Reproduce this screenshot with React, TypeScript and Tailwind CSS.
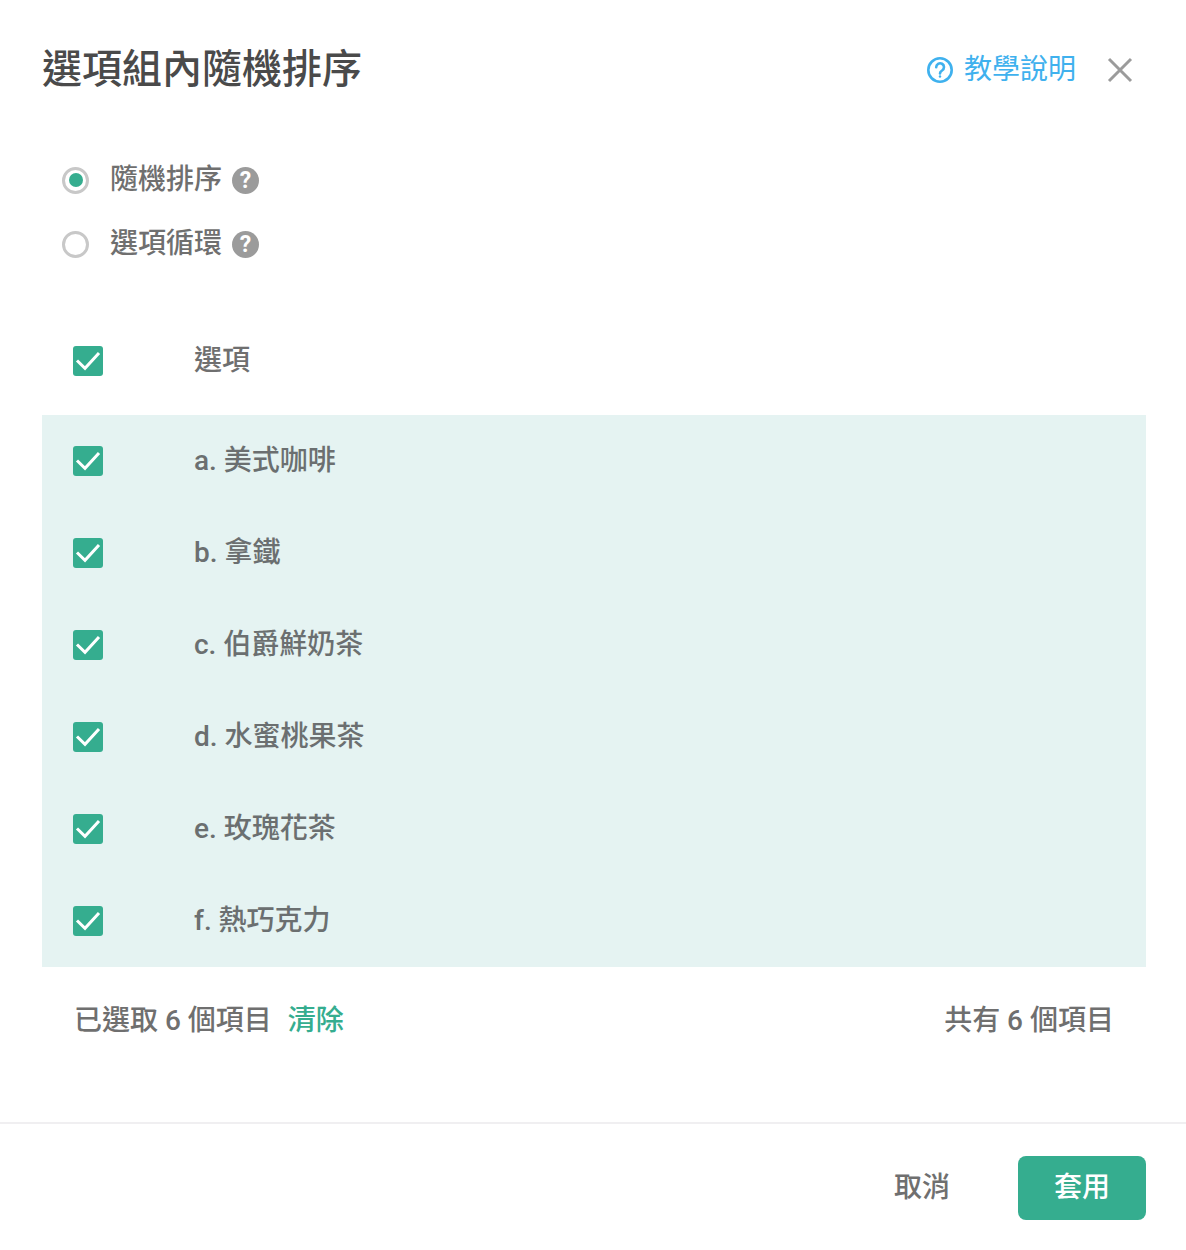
const items = ['a. 美式咖啡', 'b. 拿鐵', 'c. 伯爵鮮奶茶', 'd. 水蜜桃果茶', 'e. 玫瑰花茶', 'f. 熱巧克力']

function CheckBox() {
  return (
    <span className="flex h-[30px] w-[30px] items-center justify-center rounded-[3px] bg-[#35ad8f]">
      <svg width="30" height="30" viewBox="0 0 30 30" fill="none">
        <path d="M4 14.500L12 22.300L26 7" stroke="white" strokeWidth="3" />
      </svg>
    </span>
  )
}

function HelpDot() {
  return (
    <span className="ml-[10px] flex h-[27px] w-[27px] items-center justify-center rounded-full bg-[#9b9b9b] text-[23px] font-bold leading-none text-white">
      ?
    </span>
  )
}

function RadioRow({ label, checked }: { label: string; checked?: boolean }) {
  return (
    <div className="flex h-[64px] items-center pl-[62px]">
      <span className="flex h-[27px] w-[27px] items-center justify-center rounded-full border-[3px] border-[#c8c8c8] bg-white">
        {checked && <span className="h-[14px] w-[14px] rounded-full bg-[#35ad8f]" />}
      </span>
      <span className="ml-[21px] text-[28px] font-medium leading-none text-[#6f6f6f]">{label}</span>
      <HelpDot />
    </div>
  )
}

export default function App() {
  return (
    <div
      className="flex h-[1250px] w-[1186px] flex-col bg-white"
      style={{ fontFamily: 'Roboto, "Noto Sans CJK TC", sans-serif' }}
    >
      <div className="flex h-[148px] items-start justify-between pl-[42px] pr-[52px] pt-[46px]">
        <h1 className="text-[40px] font-medium leading-[48px] text-[#4a4a4a]">選項組內隨機排序</h1>
        <div className="flex items-center">
          <svg width="28" height="28" viewBox="0 0 28 28" fill="none" stroke="#3fb1ee" strokeWidth="2.6">
            <circle cx="14" cy="14" r="11.7" />
            <path d="M10.2 11.2a3.9 3.9 0 1 1 5.9 3.3c-1.300.8-2.100 1.500-2.100 3" strokeLinecap="round" />
            <circle cx="14" cy="20.500" r="1.200" fill="#3fb1ee" stroke="none" />
          </svg>
          <span className="ml-[10px] text-[28px] leading-[48px] text-[#3fb1ee]">教學說明</span>
          <svg className="ml-[30px]" width="28" height="28" viewBox="0 0 28 28" fill="none" stroke="#9b9b9b" strokeWidth="3">
            <path d="M3 3L25 25M25 3L3 25" />
          </svg>
        </div>
      </div>

      <div className="flex flex-col">
        <RadioRow label="隨機排序" checked />
        <RadioRow label="選項循環" />
      </div>

      <div className="mt-[39px] flex h-[100px] items-center pb-[8px] pl-[73px]">
        <CheckBox />
        <span className="ml-[91px] text-[28px] font-medium text-[#6f6f6f]">選項</span>
      </div>

      <div className="mx-[42px] flex w-[1104px] flex-col bg-[#e5f3f2]">
        {items.map((item) => (
          <div key={item} className="flex h-[92px] items-center pl-[31px]">
            <CheckBox />
            <span className="ml-[91px] text-[28px] font-medium text-[#6b6f70]">{item}</span>
          </div>
        ))}
      </div>

      <div className="flex h-[104px] items-center justify-between pl-[74px] pr-[72px] pt-[4px] text-[28px] font-medium text-[#6f6f6f]">
        <div className="flex items-center">
          <span>已選取 6 個項目</span>
          <span className="ml-[16px] text-[#35ad8f]">清除</span>
        </div>
        <span>共有 6 個項目</span>
      </div>

      <div className="mt-[51px] flex h-[127px] items-start justify-end border-t-2 border-[#f0eff1] pr-[40px] pt-[32px]">
        <span className="mr-[68px] text-[28px] font-medium leading-[64px] text-[#6f6f6f]">取消</span>
        <button className="h-[64px] w-[128px] rounded-[8px] bg-[#35ad8f] text-[28px] font-medium text-white">套用</button>
      </div>
    </div>
  )
}
